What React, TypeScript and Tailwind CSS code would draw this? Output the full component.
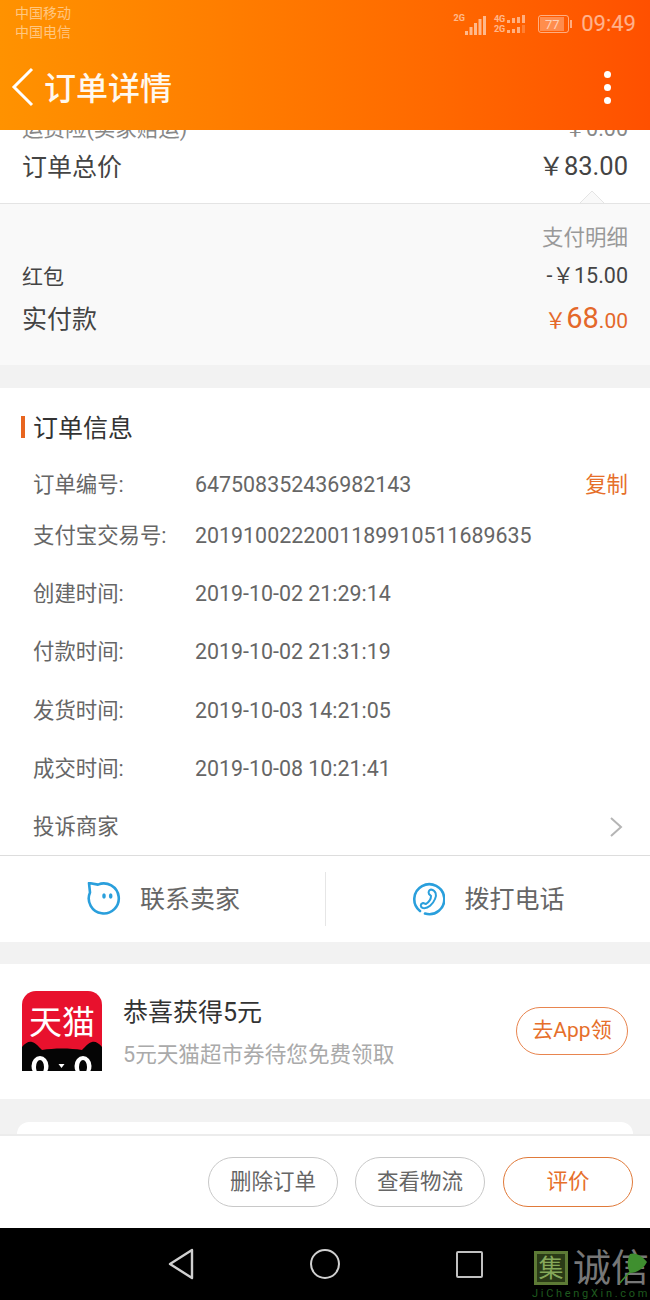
const infoRows = [
  { label: "订单编号:", value: "647508352436982143", cls: "h-[52px]" },
  { label: "支付宝交易号:", value: "2019100222001189910511689635", cls: "h-[50px] mb-[4px]" },
  { label: "创建时间:", value: "2019-10-02 21:29:14", cls: "h-[58px]" },
  { label: "付款时间:", value: "2019-10-02 21:31:19", cls: "h-[58px] mb-[1px]" },
  { label: "发货时间:", value: "2019-10-03 14:21:05", cls: "h-[58px]" },
  { label: "成交时间:", value: "2019-10-08 10:21:41", cls: "h-[58px]" },
];

function Signal({ heights }: { heights: number[] }) {
  return (
    <svg width="21" height="20" viewBox="0 0 21 20">
      {heights.map((h, i) => (
        <rect key={i} x={i * 4.5} y={20 - h} width="3" height={h} fill="#fff" opacity="0.55" />
      ))}
    </svg>
  );
}

function StatusBar() {
  return (
    <div className="flex h-[46px] justify-between pl-[15px] pr-[14px]">
      <div className="flex flex-col pt-[4px] text-[14px] leading-[19px] text-white/50">
        <span>中国移动</span>
        <span>中国电信</span>
      </div>
      <div className="flex items-center pt-[2px] text-white/55">
        <span className="self-start pt-[11px] text-[9px] font-bold leading-[10px]">2G</span>
        <div className="mt-[1px]">
          <Signal heights={[4, 8, 12, 16, 19]} />
        </div>
        <div className="ml-[8px] flex flex-col text-[9px] font-bold leading-[10px]">
          <div className="flex items-end gap-[2px]">
            <span>4G</span>
            <svg width="21" height="10">
              <rect x="0" y="6" width="3" height="3" fill="#fff" opacity="0.5" />
              <rect x="5" y="4" width="3" height="5" fill="#fff" opacity="0.5" />
              <rect x="10" y="3" width="3" height="6" fill="#fff" opacity="0.5" />
              <rect x="15" y="1" width="3" height="8" fill="#fff" opacity="0.5" />
            </svg>
          </div>
          <div className="flex items-end gap-[2px]">
            <span>2G</span>
            <svg width="21" height="10">
              <rect x="0" y="6" width="3" height="3" fill="#fff" opacity="0.5" />
              <rect x="5" y="5" width="3" height="4" fill="#fff" opacity="0.5" />
              <rect x="10" y="3" width="3" height="6" fill="#fff" opacity="0.5" />
              <rect x="15" y="1" width="3" height="8" fill="#fff" opacity="0.2" />
            </svg>
          </div>
        </div>
        <div className="ml-[10px] flex items-center">
          <div className="flex h-[18px] w-[31px] items-center rounded-[3px] border border-white/50 p-[1px]">
            <div className="flex h-full w-[24px] items-center justify-center bg-white/30 text-[13px] leading-none text-white/60">
              77
            </div>
          </div>
          <div className="ml-[1px] h-[8px] w-[2px] bg-white/50" />
        </div>
        <span className="ml-[9px] text-[22px] leading-none text-white/55">09:49</span>
      </div>
    </div>
  );
}

function Header() {
  return (
    <header className="h-[130px] shrink-0 bg-gradient-to-r from-[#ff9200] to-[#ff5000]">
      <StatusBar />
      <div className="flex h-[82px] items-center justify-between pl-[11px] pr-[39px]">
        <div className="flex items-center">
          <svg width="24" height="40" viewBox="0 0 24 40" fill="none">
            <path d="M21 2 L3 20 L21 38" stroke="#fff" strokeWidth="3" />
          </svg>
          <h1 className="ml-[9px] pt-[3px] text-[32px] font-medium leading-none text-[#fff8ee]">订单详情</h1>
        </div>
        <div className="flex flex-col gap-[6px]">
          <span className="h-[7px] w-[7px] rounded-full bg-white" />
          <span className="h-[7px] w-[7px] rounded-full bg-white" />
          <span className="h-[7px] w-[7px] rounded-full bg-white" />
        </div>
      </div>
    </header>
  );
}

function PriceSection() {
  return (
    <>
      <section className="relative h-[74px] shrink-0 border-b border-[#e4e4e4] bg-white">
        <div className="-mt-[10px] flex h-[18px] items-center justify-between pl-[22px] pr-[22px] text-[21.5px] text-[#888]">
          <span>运费险(卖家赔运)</span>
          <span>￥0.00</span>
        </div>
        <div className="mt-[5px] flex h-[46px] items-center justify-between pl-[22px] pr-[22px]">
          <span className="pt-[3px] text-[25px] text-[#444]">订单总价</span>
          <span className="text-[25.5px] text-[#444]">￥83.00</span>
        </div>
        <svg className="absolute right-[46px] bottom-[-1px]" width="24" height="14" viewBox="0 0 24 14">
          <path d="M0 13 L12 1 L24 13 Z" fill="#f9f9f9" />
          <path d="M0 13 L12 1 L24 13" fill="none" stroke="#e4e4e4" />
        </svg>
      </section>
      <section className="h-[161px] shrink-0 bg-[#f9f9f9] pl-[22px] pr-[22px] pt-[17px]">
        <div className="flex h-[34px] items-center justify-end text-[21.5px] text-[#999]">支付明细</div>
        <div className="mt-[3px] flex h-[40px] items-center justify-between text-[#444]">
          <span className="text-[21px]">红包</span>
          <span className="pb-[4px] text-[21.5px]">-￥15.00</span>
        </div>
        <div className="-mt-[1px] flex h-[46px] items-center justify-between">
          <span className="text-[25px] text-[#444]">实付款</span>
          <span className="-mt-[2px] text-[#e4682a]">
            <span className="text-[21.5px]">￥</span>
            <span className="text-[29px]">68</span>
            <span className="text-[21px]">.00</span>
          </span>
        </div>
      </section>
    </>
  );
}

function OrderInfo() {
  return (
    <section className="mt-[23px] shrink-0 bg-white pt-[24px]">
      <div className="flex h-[30px] items-center pl-[21px]">
        <span className="h-[22px] w-[4px] bg-[#e8651f]" />
        <h2 className="ml-[8px] pt-[4px] text-[25px] text-[#333]">订单信息</h2>
      </div>
      <div className="mt-[17px] text-[21.4px] leading-none">
        {infoRows.map((row, i) => (
          <div key={row.label} className={`flex items-center pl-[33px] pr-[22px] ${row.cls}`}>
            <span className="w-[162px] shrink-0 text-[#666]">{row.label}</span>
            <span className="grow text-[#666]">{row.value}</span>
            {i === 0 && <span className="text-[#e66f2a]">复制</span>}
          </div>
        ))}
        <div className="flex h-[57px] items-center justify-between pl-[33px] pr-[27px] text-[#666]">
          <span>投诉商家</span>
          <svg width="14" height="22" viewBox="0 0 14 22" fill="none">
            <path d="M2 2 L12 11 L2 20" stroke="#b5b5b5" strokeWidth="2" />
          </svg>
        </div>
      </div>
    </section>
  );
}

function ContactBar() {
  return (
    <section className="flex h-[87px] shrink-0 items-center border-t border-[#ddd] bg-white text-[25px] text-[#666]">
      <div className="flex w-[325px] items-center justify-center gap-[19px] pl-[2px]">
        <svg width="34" height="34" viewBox="0 0 34 34" fill="none">
          <path
            d="M11 2.6 A15 15 0 1 1 3 10.5 L2 1 Z"
            stroke="#2a9fdc"
            strokeWidth="2.6"
            strokeLinejoin="round"
          />
          <ellipse cx="17" cy="14" rx="1.8" ry="2.8" fill="#2a9fdc" />
          <ellipse cx="23.7" cy="14" rx="1.8" ry="2.8" fill="#2a9fdc" />
        </svg>
        <span className="pt-[2px]">联系卖家</span>
      </div>
      <div className="h-[54px] w-px bg-[#e6e6e6]" />
      <div className="flex grow items-center justify-center gap-[19px]">
        <svg width="34" height="34" viewBox="0 0 34 34" fill="none">
          <path
            d="M9 29 A15 15 0 1 1 14 31.6"
            stroke="#2a9fdc"
            strokeWidth="2.6"
            strokeLinecap="round"
          />
          <path
            d="M20 7.5 C25 8.5 26 13 24 17 C22 22 17 27 12 26 C9 25 9 22 12 21 L15 22 C18 20 20 17 20 14 L18 12 C17 10 18 8 20 7.5 Z"
            stroke="#2a9fdc"
            strokeWidth="2"
            strokeLinejoin="round"
          />
        </svg>
        <span className="pt-[2px]">拨打电话</span>
      </div>
    </section>
  );
}

function TmallIcon() {
  return (
    <svg width="80" height="80" viewBox="0 0 80 80" className="shrink-0">
      <defs>
        <clipPath id="tmall-clip">
          <path d="M14 0 H66 A14 14 0 0 1 80 14 V80 H0 V14 A14 14 0 0 1 14 0 Z" />
        </clipPath>
      </defs>
      <g clipPath="url(#tmall-clip)">
        <rect width="80" height="80" fill="#e8112d" />
        <path
          d="M0 56 C3 52 7 50 10 51 C14 52 17 56 20 59 C32 57 48 57 60 59 C63 56 66 52 70 51 C73 50 77 52 80 56 V80 H0 Z"
          fill="#050505"
        />
        <ellipse cx="18" cy="75" rx="8.5" ry="10" fill="#fff" />
        <ellipse cx="61" cy="75" rx="8.5" ry="10" fill="#fff" />
        <ellipse cx="18" cy="76" rx="4" ry="7" fill="#050505" />
        <ellipse cx="61" cy="76" rx="4" ry="7" fill="#050505" />
        <path d="M36.5 73 H42.5 L39.5 77 Z" fill="#fff" />
        <text
          x="40"
          y="43"
          textAnchor="middle"
          fontSize="33"
          fill="#fff"
          fontFamily="'Noto Sans CJK SC', sans-serif"
        >
          天猫
        </text>
      </g>
    </svg>
  );
}

function Promo() {
  return (
    <section className="mt-[22px] flex h-[135px] shrink-0 items-center bg-white pb-[1px] pl-[22px] pr-[22px]">
      <TmallIcon />
      <div className="ml-[21px] flex grow flex-col pt-[6px]">
        <span className="text-[25px] leading-[34px] text-[#333]">恭喜获得5元</span>
        <span className="mt-[8px] text-[21.6px] leading-[34px] text-[#aaa]">5元天猫超市券待您免费领取</span>
      </div>
      <button className="flex h-[48px] w-[112px] items-center justify-center rounded-full border border-[#e8854f] text-[21px] text-[#e66f2a]">
        去App领
      </button>
    </section>
  );
}

function BottomBar() {
  return (
    <div className="flex h-[94px] shrink-0 items-center justify-end gap-[17px] border-t-2 border-[#ececec] bg-white pr-[17px] text-[21.5px]">
      <button className="h-[50px] w-[130px] rounded-full border border-[#c8c8c8] text-[#666]">删除订单</button>
      <button className="h-[50px] w-[130px] rounded-full border border-[#c8c8c8] text-[#666]">查看物流</button>
      <button className="ml-[1px] h-[50px] w-[130px] rounded-full border-[1.5px] border-[#e07a3a] text-[#e66f2a]">评价</button>
    </div>
  );
}

function NavBar() {
  return (
    <nav className="relative flex h-[72px] shrink-0 items-center justify-center bg-black">
      <div className="flex w-[144px] justify-center">
        <svg width="28" height="32" viewBox="0 0 28 32" fill="none">
          <path d="M25 2 L3 16 L25 30 Z" stroke="#d0d0d0" strokeWidth="2.4" strokeLinejoin="round" />
        </svg>
      </div>
      <div className="flex w-[144px] justify-center">
        <span className="h-[30px] w-[30px] rounded-full border-[2.4px] border-[#d0d0d0]" />
      </div>
      <div className="flex w-[144px] justify-center">
        <span className="h-[27px] w-[27px] rounded-[2px] border-[2.4px] border-[#c0c0c0]" />
      </div>
      <div className="absolute right-0 top-[23px] w-[118px]">
        <div className="flex items-center pl-[2px]">
          <div className="flex h-[34px] w-[34px] items-center justify-center border-[3px] border-[#5d7a35] bg-[#2a3a16] text-[25px] leading-none text-[#86a85a]">
            集
          </div>
          <span className="ml-[5px] whitespace-nowrap text-[38px] leading-[34px] text-[#777]">诚信</span>
        </div>
        <div className="mt-[3px] whitespace-nowrap text-[11px] leading-[11px] tracking-[2.7px] text-[#1f5a1f]">JiChengXin.com</div>
        <svg className="absolute right-0 top-[2px]" width="30" height="34" viewBox="0 0 30 34" fill="none">
          <path d="M27 9 C22 2 14 -1 10 1 C7 6 7 15 10 20 C17 20 24 15 27 9 Z" fill="#3f8f2f" />
          <path d="M10 19 C6 23 3 26 0 30" stroke="#3f8f2f" strokeWidth="1.5" />
        </svg>
      </div>
    </nav>
  );
}

export default function App() {
  return (
    <div className="flex h-[1300px] w-[650px] flex-col overflow-hidden bg-[#f2f2f2] font-['Roboto','Noto_Sans_CJK_SC',sans-serif]">
      <Header />
      <main className="flex h-[1004px] shrink-0 flex-col overflow-hidden">
        <PriceSection />
        <OrderInfo />
        <ContactBar />
        <Promo />
        <div className="mx-[17px] mt-[23px] h-[14px] shrink-0 rounded-t-[12px] bg-white" />
      </main>
      <BottomBar />
      <NavBar />
    </div>
  );
}
